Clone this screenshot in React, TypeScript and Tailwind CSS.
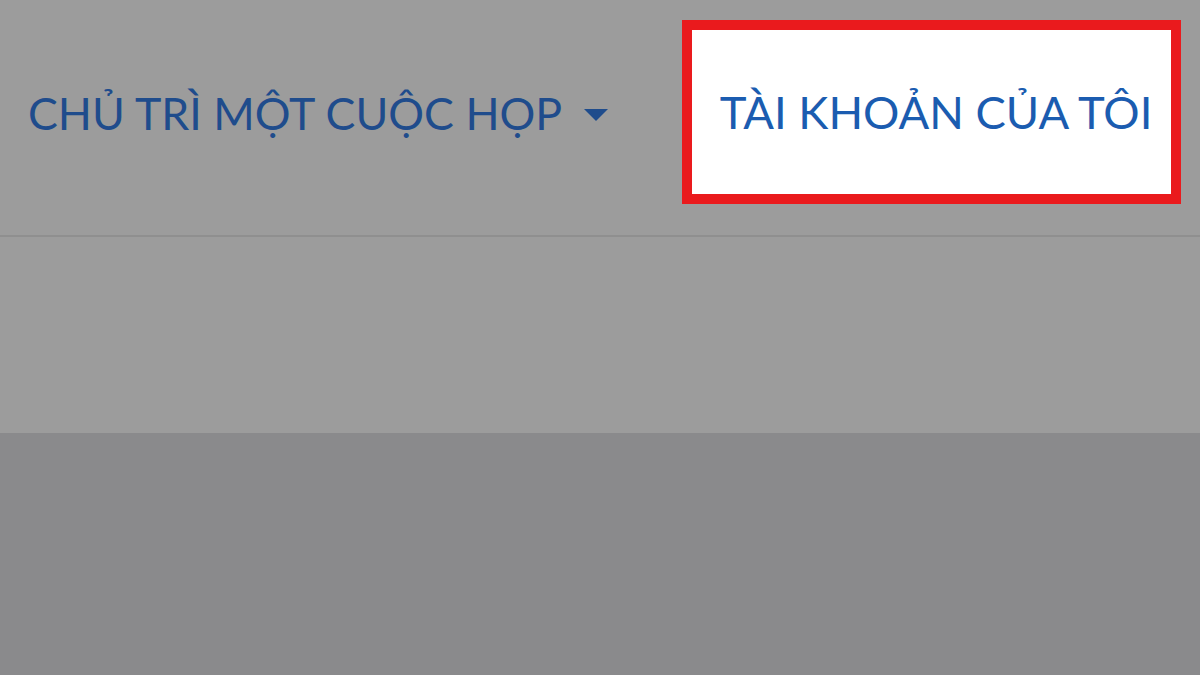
import React from "react";

export default function App() {
  return (
    <div
      className="w-[1200px] h-[675px] overflow-hidden flex flex-col bg-[#9c9c9c]"
      style={{ fontFamily: "Lato, 'Noto Sans', sans-serif" }}
    >
      {/* top nav */}
      <header className="h-[237px] shrink-0 flex items-start border-b-2 border-[#8f8f8f]">
        <div className="h-[226px] flex items-center pl-[28px] gap-[22px]">
          <span className="text-[44.7px] leading-none text-[#1f4c8c]">
            CHỦ TRÌ MỘT CUỘC HỌP
          </span>
          <svg width="24" height="13" viewBox="0 0 24 13" className="mt-[4px]">
            <path d="M0 0 L24 0 L12 12 Z" fill="#1f4c8c" />
          </svg>
        </div>
        <div className="ml-auto mt-[20px] mr-[19px] w-[499px] h-[184px] border-[10px] border-[#ea1a1d] bg-white flex items-center justify-center pl-[9px]">
          <span className="text-[45.4px] leading-none text-[#1b5cb0]">
            TÀI KHOẢN CỦA TÔI
          </span>
        </div>
      </header>
      <div className="h-[196px] shrink-0 bg-[#9c9c9c]" />
      <div className="flex-1 bg-[#8a8a8c]" />
    </div>
  );
}
